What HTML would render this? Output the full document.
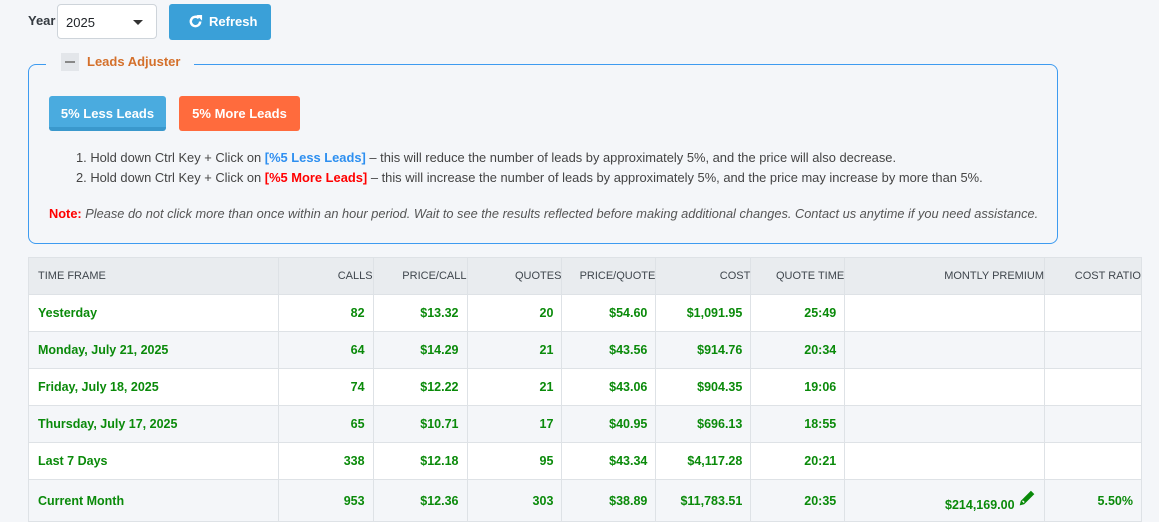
<!DOCTYPE html>
<html><head><meta charset="utf-8"><style>
*{box-sizing:border-box;margin:0;padding:0}
body{width:1159px;height:522px;background:#f4f6f9;font-family:"Liberation Sans",sans-serif;color:#212529;position:relative;overflow:hidden}
.abs{position:absolute}
.yr{left:28px;top:13px;font-weight:bold;font-size:13px;color:#343a40}
.sel{left:57px;top:4px;width:100px;height:35px;background:#fff;border:1px solid #ced4da;border-radius:4px;font-size:13px;padding:10px 8px}
.sel:after{content:"";position:absolute;right:13px;top:15px;border:5px solid transparent;border-top:5px solid #333;border-bottom:0}
.ref{left:169px;top:4px;width:102px;height:36px;background:#3aa0d8;border-radius:3px;color:#fff;font-weight:bold;font-size:13px;padding:10px 0 0 40px}
.box{left:28px;top:64px;width:1030px;height:180px;border:1px solid #3d9bf0;border-radius:8px}
.leg{left:46px;top:52px;width:148px;height:20px;background:#f4f6f9}
.min{left:61px;top:53px;width:18px;height:18px;background:#e3e6ea}
.min:after{content:"";position:absolute;left:4px;top:8px;width:10px;height:2px;background:#888}
.legt{left:87px;top:54px;color:#d4702b;font-weight:bold;font-size:13px}
.b1{left:49px;top:96px;width:117px;height:35px;background:#4aabdf;border-radius:3px;border-bottom:4px solid #3a98cc;color:#fff;font-weight:bold;font-size:13px;text-align:center;padding-top:10px}
.b2{left:179px;top:96px;width:121px;height:35px;background:#ff6b3d;border-radius:3px;color:#fff;font-weight:bold;font-size:13px;text-align:center;padding-top:10px}
.li{font-size:12.9px;color:#444;white-space:nowrap}
.bl{color:#2d8ff0;font-weight:bold}.rd{color:#f00;font-weight:bold}
.note{left:49px;top:206px;font-size:12.8px;color:#555;font-style:italic;white-space:nowrap}
table{position:absolute;left:28px;top:257px;width:1114px;border-collapse:collapse;font-size:12.5px}
td,th{border:1px solid #dee2e6;padding:0 8px;text-align:right;color:#0a8a0a;font-weight:bold;height:37px}
th{background:#e9ecef;color:#3f464d;font-weight:normal;font-size:11px;height:37px;padding:0}
td:first-child,th:first-child{text-align:left;padding-left:9px}
tr:nth-child(odd) td{background:#f4f6f9}
tr:nth-child(even) td{background:#fff}
tr.last td{height:42px}
</style></head><body>
<div class="abs yr">Year</div>
<div class="abs sel">2025</div>
<div class="abs ref"><svg class="abs" style="left:19px;top:10px" width="15" height="15" viewBox="0 0 16 16"><path d="M13 8a5 5 0 1 1-1.5-3.6" fill="none" stroke="#fff" stroke-width="2.6"/><path d="M9 1h6v6z" fill="#fff"/></svg>Refresh</div>
<div class="abs box"></div>
<div class="abs leg"></div>
<div class="abs min"></div>
<div class="abs legt">Leads Adjuster</div>
<div class="abs b1">5% Less Leads</div>
<div class="abs b2">5% More Leads</div>
<div class="abs li" style="left:76px;top:150px">1. Hold down Ctrl Key + Click on <span class="bl">[%5 Less Leads]</span> – this will reduce the number of leads by approximately 5%, and the price will also decrease.</div>
<div class="abs li" style="left:76px;top:170px">2. Hold down Ctrl Key + Click on <span class="rd">[%5 More Leads]</span> – this will increase the number of leads by approximately 5%, and the price may increase by more than 5%.</div>
<div class="abs note"><span class="rd" style="font-style:normal">Note:</span> Please do not click more than once within an hour period. Wait to see the results reflected before making additional changes. Contact us anytime if you need assistance.</div>
<table>
<colgroup><col style="width:250px"><col style="width:95px"><col style="width:94px"><col style="width:95px"><col style="width:94px"><col style="width:95px"><col style="width:94px"><col style="width:200px"><col style="width:97px"></colgroup>
<tr><th>TIME FRAME</th><th>CALLS</th><th>PRICE/CALL</th><th>QUOTES</th><th>PRICE/QUOTE</th><th>COST</th><th>QUOTE TIME</th><th>MONTLY PREMIUM</th><th>COST RATIO</th></tr>
<tr><td>Yesterday</td><td>82</td><td>$13.32</td><td>20</td><td>$54.60</td><td>$1,091.95</td><td>25:49</td><td></td><td></td></tr>
<tr><td>Monday, July 21, 2025</td><td>64</td><td>$14.29</td><td>21</td><td>$43.56</td><td>$914.76</td><td>20:34</td><td></td><td></td></tr>
<tr><td>Friday, July 18, 2025</td><td>74</td><td>$12.22</td><td>21</td><td>$43.06</td><td>$904.35</td><td>19:06</td><td></td><td></td></tr>
<tr><td>Thursday, July 17, 2025</td><td>65</td><td>$10.71</td><td>17</td><td>$40.95</td><td>$696.13</td><td>18:55</td><td></td><td></td></tr>
<tr><td>Last 7 Days</td><td>338</td><td>$12.18</td><td>95</td><td>$43.34</td><td>$4,117.28</td><td>20:21</td><td></td><td></td></tr>
<tr class="last"><td>Current Month</td><td>953</td><td>$12.36</td><td>303</td><td>$38.89</td><td>$11,783.51</td><td>20:35</td><td style="padding-right:8px">$214,169.00 <svg width="18" height="18" viewBox="0 0 16 16" style="vertical-align:2px"><path d="M11.5 1.5l3 3-9 9-4 1 1-4z" fill="#0a8a0a"/><path d="M4 10.5l1.5 1.5" stroke="#fff" stroke-width="1.2"/></svg></td><td>5.50%</td></tr>
</table>
</body></html>
